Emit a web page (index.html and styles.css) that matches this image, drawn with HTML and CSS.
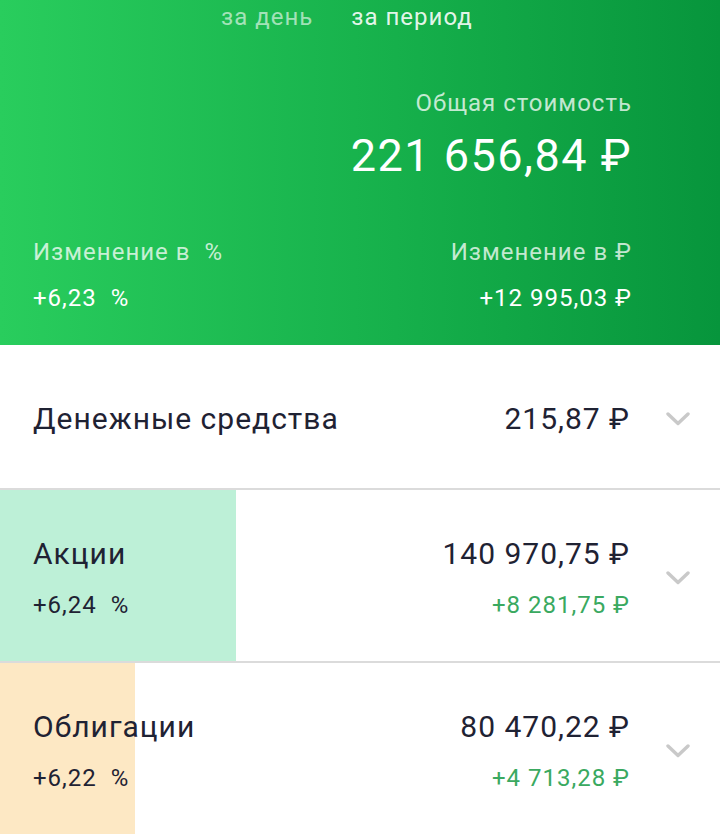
FILE: index.html
```html
<!DOCTYPE html>
<html lang="ru">

<head>
    <meta charset="UTF-8">
    <meta name="viewport" content="width=device-width, initial-scale=1.0">
    <title>Портфель</title>
    <link rel="stylesheet" href="styles.css">
</head>

<body>
    <div class="header">
        <div class="tabs">
            <span class="tab">за день</span>
            <span class="tab active">за период</span>
        </div>
        <div class="total">
            <div class="label">Общая стоимость</div>
            <div class="total_value">221 656,84 ₽</div>
        </div>
        <div class="changes">
            <div class="change">
                <div class="label">Изменение в &nbsp;%</div>
                <div class="change_value">+6,23 &nbsp;%</div>
            </div>
            <div class="change right">
                <div class="label">Изменение в ₽</div>
                <div class="change_value">+12 995,03 ₽</div>
            </div>
        </div>
    </div>

    <div class="list">
        <div class="row single">
            <div class="name">
                <div class="title">Денежные средства</div>
            </div>
            <div class="amount">
                <div class="sum">215,87 ₽</div>
            </div>
            <svg class="chevron" width="24" height="16" viewBox="0 0 24 16">
                <polyline points="2,3 12,12.5 22,3" />
            </svg>
        </div>
        <div class="row" style="--share: 236px; --fill: #bdf0d7;">
            <div class="name">
                <div class="title">Акции</div>
                <div class="percent">+6,24 &nbsp;%</div>
            </div>
            <div class="amount">
                <div class="sum">140 970,75 ₽</div>
                <div class="profit">+8 281,75 ₽</div>
            </div>
            <svg class="chevron" width="24" height="16" viewBox="0 0 24 16">
                <polyline points="2,3 12,12.5 22,3" />
            </svg>
        </div>
        <div class="row" style="--share: 135px; --fill: #fde8c4;">
            <div class="name">
                <div class="title">Облигации</div>
                <div class="percent">+6,22 &nbsp;%</div>
            </div>
            <div class="amount">
                <div class="sum">80 470,22 ₽</div>
                <div class="profit">+4 713,28 ₽</div>
            </div>
            <svg class="chevron" width="24" height="16" viewBox="0 0 24 16">
                <polyline points="2,3 12,12.5 22,3" />
            </svg>
        </div>
    </div>
</body>

</html>
```

FILE: styles.css
```css
body {
    margin: 0;
    font-family: Roboto, "Noto Sans", sans-serif;
    letter-spacing: 1px;
    background-color: #fff;
    color: #1f2233;
}

.header {
    height: 345px;
    box-sizing: border-box;
    padding: 3px 88px 0 33px;
    background: linear-gradient(90deg, #29cd5d 0%, #16b04b 55%, #07953c 100%);
    color: #fff;
    display: flex;
    flex-direction: column;
}

.tabs {
    display: flex;
    gap: 38px;
    margin-left: 188px;
    font-size: 24px;
    line-height: 28px;
}

.tab {
    color: rgba(255, 255, 255, 0.6);
}

.tab.active {
    color: rgba(255, 255, 255, 0.9);
}

.label {
    font-size: 24px;
    line-height: 28px;
    color: rgba(255, 255, 255, 0.75);
}

.total {
    margin-top: 58px;
    text-align: right;
}

.total_value {
    margin-top: 12px;
    font-size: 45px;
    line-height: 54px;
    letter-spacing: 1.5px;
}

.changes {
    margin-top: 55px;
    display: flex;
    justify-content: space-between;
}

.change_value {
    margin-top: 18px;
    font-size: 24px;
    line-height: 28px;
}

.right {
    text-align: right;
}

.row {
    display: flex;
    align-items: center;
    padding: 46px 0 41px 33px;
    border-bottom: 2px solid #dbdbdb;
    background: linear-gradient(90deg, var(--fill) var(--share), #fff var(--share));
}

.row.single {
    padding: 56px 0 51px 33px;
}

.name {
    flex: 1;
}

.title,
.sum {
    font-size: 30px;
    line-height: 36px;
}

.percent,
.profit {
    margin-top: 18px;
    font-size: 24px;
    line-height: 30px;
}

.amount {
    text-align: right;
}

.profit {
    color: #3aa960;
}

.chevron {
    margin: 0 30px 0 36px;
    fill: none;
    stroke: #c9c9c9;
    stroke-width: 3.4;
    stroke-linecap: round;
    stroke-linejoin: round;
}
```
